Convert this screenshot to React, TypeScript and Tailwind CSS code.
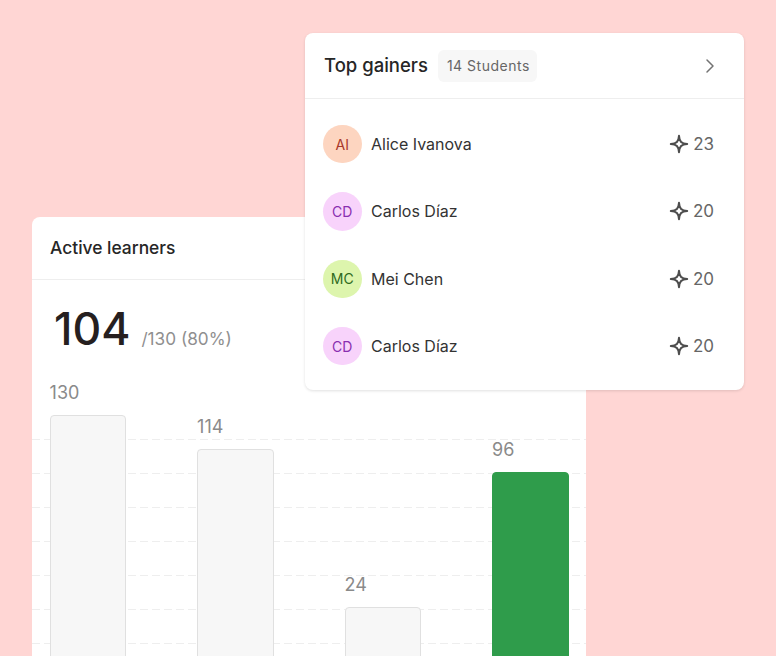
import React from 'react';
import { ChevronRight } from 'lucide-react';

const gainers = [
    { initials: 'AI', name: 'Alice Ivanova', score: 23, avatar: 'bg-[#fdd5c0] text-[#a8382a]' },
    { initials: 'CD', name: 'Carlos Díaz', score: 20, avatar: 'bg-[#f8d3fb] text-[#8a2fb0]' },
    { initials: 'MC', name: 'Mei Chen', score: 20, avatar: 'bg-[#ddf5ad] text-[#2f6b1e]' },
    { initials: 'CD', name: 'Carlos Díaz', score: 20, avatar: 'bg-[#f8d3fb] text-[#8a2fb0]' }
];

function Sparkle() {
    return (
        <svg width="20" height="20" viewBox="0 0 20 20" fill="none" className="text-[#4d4d4d]">
            <path
                d="M10 1.8C10.4 7.6 12.4 9.6 18.2 10C12.4 10.4 10.4 12.4 10 18.2C9.6 12.4 7.6 10.4 1.8 10C7.6 9.6 9.6 7.6 10 1.8Z"
                stroke="currentColor"
                strokeWidth="2"
                strokeLinejoin="round"
            />
        </svg>
    );
}

function Bar({ value, offset, green }: { value: number; offset: string; green?: boolean }) {
    return (
        <div className={`w-[76.5px] flex flex-col ${offset}`}>
            <div className="text-[18px] leading-[22px] text-[#8a8a8a] h-[23px]">{value}</div>
            <div
                className={`h-[300px] rounded-[4px] mt-[10px] border ${
                    green ? 'bg-[#2f9c4b] border-[#2f9c4b]' : 'bg-[#f7f7f7] border-[#e0e0e0]'
                }`}
            />
        </div>
    );
}

export default function App() {
    return (
        <div className="relative h-[656px] w-[776px] overflow-hidden bg-[#ffd6d4] pt-[217px] pl-[32px] font-['Inter',sans-serif]">
            <div className="w-[554px] h-[500px] bg-white rounded-t-[8px]">
                <div className="h-[63px] border-b border-[#eeeeee] px-[18px] flex items-center">
                    <span className="text-[17.4px] font-medium text-[#262626]">Active learners</span>
                </div>
                <div className="flex items-baseline pl-[22px] pt-[20px] h-[87px]">
                    <span className="text-[44.5px] leading-[58px] font-medium text-[#261f1f]">104</span>
                    <span className="text-[17.2px] text-[#8f8f8f] ml-[11px]">/130 (80%)</span>
                </div>
                <div className="relative">
                    <div className="absolute left-0 right-0 top-[72px] flex flex-col gap-[33px]">
                        {[0, 1, 2, 3, 4, 5, 6].map((i) => (
                            <div
                                key={i}
                                className="h-px bg-[repeating-linear-gradient(90deg,#eeeeee_0_8px,transparent_8px_12px)]"
                            />
                        ))}
                    </div>
                    <div className="relative flex gap-[71px] pl-[17.6px]">
                        <Bar value={130} offset="mt-[15px]" />
                        <Bar value={114} offset="mt-[49px]" />
                        <Bar value={24} offset="mt-[207px]" />
                        <Bar value={96} offset="mt-[72px]" green />
                    </div>
                </div>
            </div>

            <div className="absolute left-[305px] top-[33px] w-[439px] h-[357px] bg-white rounded-[8px] shadow-[0_1px_3px_rgba(0,0,0,0.12)]">
                <div className="h-[66px] border-b border-[#eeeeee] pl-[19px] pr-[22px] flex items-center">
                    <span className="text-[18.5px] font-medium text-[#262626]">Top gainers</span>
                    <span className="ml-[10px] h-[32px] pl-[9px] pr-[7px] flex items-center rounded-[6px] bg-[#f7f7f7] text-[14px] tracking-[0.5px] text-[#666666]">
                        14 Students
                    </span>
                    <ChevronRight className="ml-auto text-[#737373]" size={24} strokeWidth={1.5} />
                </div>
                <div className="flex flex-col gap-[29.4px] pt-[26px] pl-[18px] pr-[30px]">
                    {gainers.map((g, i) => (
                        <div key={i} className="h-[38px] flex items-center">
                            <div className={`w-[38.5px] h-[38.5px] rounded-full flex items-center justify-center text-[14px] ${g.avatar}`}>
                                {g.initials}
                            </div>
                            <span className="ml-[9.5px] text-[16px] text-[#333333]">{g.name}</span>
                            <div className="ml-auto flex items-center gap-[4px]">
                                <Sparkle />
                                <span className="text-[17px] text-[#666666] pt-[1px]">{g.score}</span>
                            </div>
                        </div>
                    ))}
                </div>
            </div>
        </div>
    );
}
